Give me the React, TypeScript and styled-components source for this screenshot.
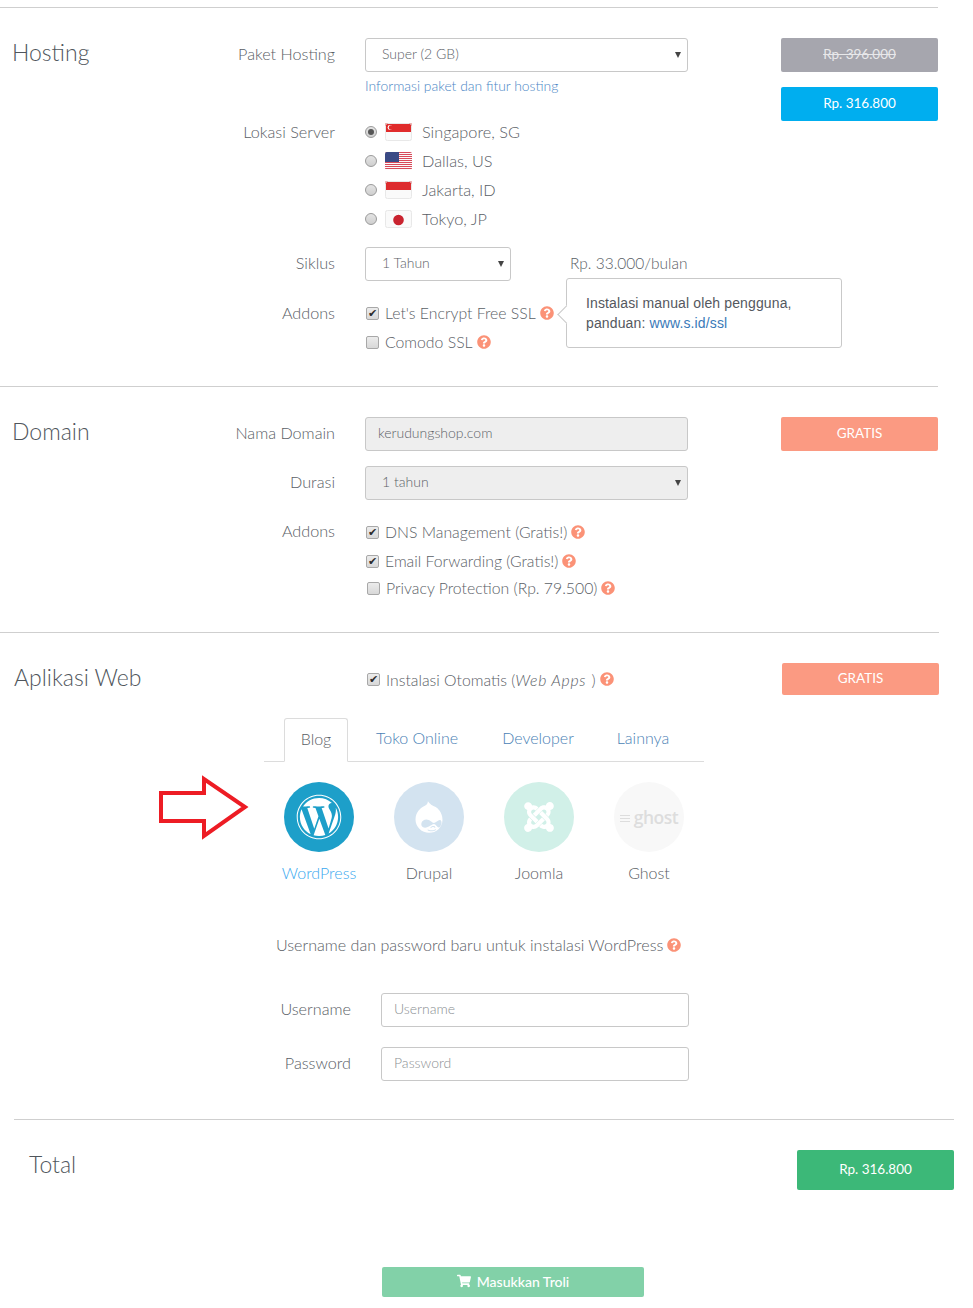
import type { ReactNode } from 'react';
import styled, { createGlobalStyle } from 'styled-components';
import { FaQuestionCircle, FaShoppingCart, FaWordpress, FaDrupal, FaJoomla } from 'react-icons/fa';

const GlobalStyle = createGlobalStyle`
  html, body {
    margin: 0;
    padding: 0;
    background: #fff;
  }
  body {
    font-family: 'Lato', 'Liberation Sans', sans-serif;
    font-weight: 300;
    font-size: 16px;
    color: #4a5056;
  }
  * {
    box-sizing: border-box;
  }
`;

const Page = styled.div`
  position: relative;
  width: 973px;
  height: 1308px;
  padding-top: 7px;
  overflow: hidden;
`;

const Section = styled.section<{ $width: number; $height: number }>`
  display: grid;
  grid-template-columns: 200px 1fr 157px;
  width: ${(p) => p.$width}px;
  height: ${(p) => p.$height}px;
  border-top: 1px solid #cfcfcf;
  padding-top: 30px;
`;

const SectionTitle = styled.h2<{ $left?: number }>`
  margin: -1px 0 0;
  padding-left: ${(p) => p.$left ?? 12}px;
  font-size: 23px;
  line-height: 30px;
  font-weight: 300;
  color: #50565c;
`;

const Fields = styled.div`
  display: flex;
  flex-direction: column;
  min-width: 0;
`;

const Row = styled.div<{ $mt?: number; $labelWidth?: number }>`
  display: grid;
  grid-template-columns: ${(p) => p.$labelWidth ?? 135}px 1fr;
  column-gap: 30px;
  margin-top: ${(p) => p.$mt ?? 0}px;
`;

const Label = styled.label`
  text-align: right;
  line-height: 32px;
  font-size: 16.2px;
  color: #5a6066;
`;

const Stack = styled.div`
  display: flex;
  flex-direction: column;
`;

const SelectWrap = styled.div<{ $width: number; $disabled?: boolean }>`
  position: relative;
  display: flex;
  align-items: center;
  width: ${(p) => p.$width}px;
  height: 34px;
  padding: 0 0 4px 16px;
  border: 1px solid #c8c8c8;
  border-radius: 3px;
  background: ${(p) => (p.$disabled ? '#eeeeee' : '#fff')};
  font-size: 14px;
  color: #5c6268;

  &::after {
    content: '';
    position: absolute;
    right: 6px;
    top: 13px;
    border-left: 3.5px solid transparent;
    border-right: 3.5px solid transparent;
    border-top: 6px solid #444;
  }
`;

const TextField = styled.div<{ $disabled?: boolean; $muted?: boolean; $width?: number }>`
  display: flex;
  align-items: center;
  width: ${(p) => p.$width ?? 323}px;
  height: 34px;
  padding: 0 0 4px 12px;
  border: 1px solid #c8c8c8;
  border-radius: 3px;
  background: ${(p) => (p.$disabled ? '#eeeeee' : '#fff')};
  font-size: 14px;
  color: ${(p) => (p.$muted ? '#8b8f93' : '#5c6268')};
`;

const InfoLink = styled.a`
  margin-top: 5px;
  font-size: 13.9px;
  line-height: 18px;
  color: #4a86c5;
`;

const RadioList = styled.div`
  display: flex;
  flex-direction: column;
  margin-top: 1px;
`;

const RadioRow = styled.div`
  display: flex;
  align-items: center;
  height: 29px;
`;

const Radio = styled.span<{ $on?: boolean }>`
  display: flex;
  align-items: center;
  justify-content: center;
  width: 12px;
  height: 12px;
  margin-right: 8px;
  border: 1px solid #9a9a9a;
  border-radius: 50%;
  background: linear-gradient(#e4e4e4, #cfcfcf);

  &::after {
    content: '';
    display: ${(p) => (p.$on ? 'block' : 'none')};
    width: 6px;
    height: 6px;
    border-radius: 50%;
    background: #555;
  }
`;

const FlagBox = styled.svg`
  flex: none;
  margin-right: 10px;
`;

const OptionText = styled.span`
  font-size: 15.8px;
  color: #5a6066;

  em {
    padding-right: 1px;
    letter-spacing: 0.7px;
  }
`;

const RadioText = styled(OptionText)`
  font-size: 16.3px;
`;

const SiklusRow = styled.div`
  display: flex;
  align-items: center;
  gap: 59px;
`;

const PerMonth = styled.span`
  padding-bottom: 2px;
  font-size: 15.5px;
  color: #5a6066;
`;

const CheckList = styled.div<{ $mt?: number }>`
  display: flex;
  flex-direction: column;
  margin-top: ${(p) => p.$mt ?? 0}px;
`;

const CheckRow = styled.div<{ $height?: number; $shift?: number }>`
  display: flex;
  align-items: center;
  height: ${(p) => p.$height ?? 29}px;
  margin-left: ${(p) => p.$shift ?? 0}px;
`;

const Check = styled.span`
  display: flex;
  align-items: center;
  justify-content: center;
  flex: none;
  width: 13px;
  height: 13px;
  margin: 1px 6px 0 1px;
  border: 1px solid #a8a8a8;
  border-radius: 2px;
  background: linear-gradient(#ececec, #d8d8d8);
  font-family: 'DejaVu Sans', sans-serif;
  font-size: 11px;
  line-height: 1;
  font-weight: 400;
  color: #2c2c2c;
`;

const HelpIcon = styled(FaQuestionCircle)`
  flex: none;
  margin-left: 4px;
  width: 14px;
  height: 14px;
  color: #fb9277;
`;

const Popover = styled.div`
  position: absolute;
  left: 566px;
  top: 278px;
  width: 276px;
  height: 70px;
  padding: 14px 19px;
  border: 1px solid #c9c9c9;
  border-radius: 3px;
  background: #fff;
  font-family: 'Liberation Sans', Arial, sans-serif;
  font-weight: 400;
  font-size: 14px;
  letter-spacing: 0.13px;
  line-height: 20px;
  color: #54585e;

  &::before {
    content: '';
    position: absolute;
    left: -7px;
    top: 29px;
    width: 12px;
    height: 12px;
    background: #fff;
    border-left: 1px solid #c9c9c9;
    border-bottom: 1px solid #c9c9c9;
    transform: rotate(45deg);
  }

  a {
    color: #3a7ab8;
  }
`;

const Side = styled.div`
  display: flex;
  flex-direction: column;
  gap: 15px;
`;

const PriceBox = styled.div<{ $bg: string; $height?: number; $width?: number; $strike?: boolean; $color?: string }>`
  display: flex;
  align-items: center;
  justify-content: center;
  width: ${(p) => (p.$width ? `${p.$width}px` : 'auto')};
  height: ${(p) => p.$height ?? 34}px;
  padding-bottom: 2px;
  border-radius: 2px;
  background: ${(p) => p.$bg};
  color: ${(p) => p.$color ?? '#fff'};
  font-size: 13.5px;
  font-weight: 400;
  text-decoration: ${(p) => (p.$strike ? 'line-through' : 'none')};
`;

const Tabs = styled.div`
  display: flex;
  align-items: flex-end;
  width: 440px;
  height: 44px;
  margin: 23px 0 0 64px;
  padding-left: 20px;
  border-bottom: 1px solid #dcdcdc;
`;

const Tab = styled.div<{ $active?: boolean; $width: number }>`
  flex: none;
  width: ${(p) => p.$width}px;
  height: 44px;
  line-height: 41px;
  text-align: center;
  font-size: 16px;
  color: ${(p) => (p.$active ? '#5a6066' : '#4a7fb5')};
  ${(p) =>
    p.$active &&
    `
    margin-bottom: -1px;
    line-height: 39px;
    background: #fff;
    border: 1px solid #dcdcdc;
    border-bottom-color: #fff;
    border-radius: 3px 3px 0 0;
  `}
`;

const Apps = styled.div`
  display: flex;
  margin: 20px 0 0 84px;
`;

const AppItem = styled.div`
  display: flex;
  flex-direction: column;
  align-items: center;
  width: 70px;
  margin-right: 40px;
  white-space: nowrap;
`;

const AppCircle = styled.div<{ $bg: string }>`
  display: flex;
  align-items: center;
  justify-content: center;
  flex: none;
  width: 70px;
  height: 70px;
  border-radius: 50%;
  background: ${(p) => p.$bg};
  color: #fff;
`;

const AppName = styled.div<{ $active?: boolean }>`
  margin-top: 11px;
  font-size: 16px;
  line-height: 20px;
  color: ${(p) => (p.$active ? '#3aa9ef' : '#5a6066')};
`;

const GhostMark = styled.span`
  display: flex;
  align-items: center;
  gap: 4px;
  font-family: 'Open Sans', sans-serif;
  font-weight: 600;
  font-size: 17.5px;
  letter-spacing: -0.5px;
  color: #dddddd;
`;

const GhostLines = styled.span`
  width: 10px;
  height: 8px;
  margin-top: 3px;
  background: repeating-linear-gradient(#dddddd 0 1px, transparent 1px 3px);
`;

const CredentialsNote = styled.div`
  display: flex;
  align-items: center;
  margin-top: 52px;
  padding-left: 76px;
  width: 700px;
  font-size: 16.1px;
  line-height: 20px;
  color: #5a6066;
`;

const Arrow = styled.svg`
  position: absolute;
  left: 158px;
  top: 774px;
`;

const TotalSection = styled.section`
  margin-left: 14px;
  width: 940px;
  border-top: 1px solid #cfcfcf;
  padding-top: 30px;
`;

const TotalRow = styled.div`
  display: flex;
  justify-content: space-between;
  align-items: flex-start;
`;

const CartButton = styled.button`
  display: flex;
  align-items: center;
  justify-content: center;
  gap: 6px;
  width: 262px;
  height: 30px;
  margin: 77px 0 0 368px;
  padding: 0 0 2px;
  border: none;
  border-radius: 2px;
  background: #82d1a8;
  color: #fff;
  font-family: 'Lato', sans-serif;
  font-size: 14px;
  font-weight: 500;
`;

function Flag({ code }: { code: 'sg' | 'us' | 'id' | 'jp' }) {
  return (
    <FlagBox width="27" height="18" viewBox="0 0 27 18">
      <defs>
        <clipPath id={`clip-${code}`}>
          <rect width="27" height="18" rx="2" />
        </clipPath>
      </defs>
      <g clipPath={`url(#clip-${code})`}>
        <rect width="27" height="18" fill="#fafafa" />
        {code === 'sg' && (
          <>
            <rect width="27" height="9" fill="#e02b2b" />
            <circle cx="5" cy="4.5" r="2.4" fill="#fff" />
            <circle cx="6" cy="4.5" r="2.2" fill="#e02b2b" />
          </>
        )}
        {code === 'id' && <rect width="27" height="9" fill="#dd2c2f" />}
        {code === 'jp' && <circle cx="13.5" cy="10" r="5.3" fill="#c9232f" />}
        {code === 'us' && (
          <>
            {[0, 1, 2, 3, 4, 5, 6, 7, 8].map((i) => (
              <rect key={i} y={i * 2} width="27" height="1" fill="#d9495a" />
            ))}
            <rect width="14" height="10" fill="#3a4a85" />
          </>
        )}
      </g>
      {code !== 'us' && <rect x="0.5" y="0.5" width="26" height="17" rx="2" fill="none" stroke="#e8e8e8" />}
    </FlagBox>
  );
}

function CheckOption({
  on,
  children,
  height,
  shift,
}: {
  on?: boolean;
  children: ReactNode;
  height?: number;
  shift?: number;
}) {
  return (
    <CheckRow $height={height} $shift={shift}>
      <Check>{on ? '✔' : ''}</Check>
      <OptionText>{children}</OptionText>
      <HelpIcon />
    </CheckRow>
  );
}

export default function App() {
  return (
    <Page>
      <GlobalStyle />

      {/* Hosting */}
      <Section $width={938} $height={379}>
        <SectionTitle>Hosting</SectionTitle>
        <Fields>
          <Row>
            <Label>Paket Hosting</Label>
            <Stack>
              <SelectWrap $width={323}>Super (2 GB)</SelectWrap>
              <InfoLink>Informasi paket dan fitur hosting</InfoLink>
            </Stack>
          </Row>
          <Row $mt={21}>
            <Label>Lokasi Server</Label>
            <RadioList>
              <RadioRow><Radio $on /><Flag code="sg" /><RadioText>Singapore, SG</RadioText></RadioRow>
              <RadioRow><Radio /><Flag code="us" /><RadioText>Dallas, US</RadioText></RadioRow>
              <RadioRow><Radio /><Flag code="id" /><RadioText>Jakarta, ID</RadioText></RadioRow>
              <RadioRow><Radio /><Flag code="jp" /><RadioText>Tokyo, JP</RadioText></RadioRow>
            </RadioList>
          </Row>
          <Row $mt={14}>
            <Label>Siklus</Label>
            <SiklusRow>
              <SelectWrap $width={146}>1 Tahun</SelectWrap>
              <PerMonth>Rp. 33.000/bulan</PerMonth>
            </SiklusRow>
          </Row>
          <Row $mt={16}>
            <Label>Addons</Label>
            <CheckList $mt={1}>
              <CheckOption on>Let's Encrypt Free SSL</CheckOption>
              <CheckOption>Comodo SSL</CheckOption>
            </CheckList>
          </Row>
        </Fields>
        <Side>
          <PriceBox $bg="#a6a6ae" $color="#e8e8ea" $strike>Rp. 396.000</PriceBox>
          <PriceBox $bg="#00aeef">Rp. 316.800</PriceBox>
        </Side>
      </Section>

      {/* Domain */}
      <Section $width={938} $height={246}>
        <SectionTitle>Domain</SectionTitle>
        <Fields>
          <Row>
            <Label>Nama Domain</Label>
            <TextField $disabled>kerudungshop.com</TextField>
          </Row>
          <Row $mt={15}>
            <Label>Durasi</Label>
            <SelectWrap $width={323} $disabled>1 tahun</SelectWrap>
          </Row>
          <Row $mt={15}>
            <Label>Addons</Label>
            <CheckList $mt={2}>
              <CheckOption on>DNS Management (Gratis!)</CheckOption>
              <CheckOption on>Email Forwarding (Gratis!)</CheckOption>
              <CheckOption height={25} shift={1}>Privacy Protection (Rp. 79.500)</CheckOption>
            </CheckList>
          </Row>
        </Fields>
        <Side>
          <PriceBox $bg="#fb9a82">GRATIS</PriceBox>
        </Side>
      </Section>

      {/* Aplikasi Web */}
      <Section $width={939} $height={487}>
        <SectionTitle $left={14}>Aplikasi Web</SectionTitle>
        <Fields>
          <Row $labelWidth={136}>
            <span />
            <CheckRow $height={32}>
              <Check>✔</Check>
              <OptionText>Instalasi Otomatis (<em>Web Apps</em> )</OptionText>
              <HelpIcon />
            </CheckRow>
          </Row>
          <Tabs>
            <Tab $active $width={64}>Blog</Tab>
            <Tab $width={138}>Toko Online</Tab>
            <Tab $width={104}>Developer</Tab>
            <Tab $width={106}>Lainnya</Tab>
          </Tabs>
          <Apps>
            <AppItem>
              <AppCircle $bg="#1d9fc9"><FaWordpress size={46} /></AppCircle>
              <AppName $active>WordPress</AppName>
            </AppItem>
            <AppItem>
              <AppCircle $bg="#d3e3f0"><FaDrupal size={36} /></AppCircle>
              <AppName>Drupal</AppName>
            </AppItem>
            <AppItem>
              <AppCircle $bg="#d1f0e8"><FaJoomla size={34} /></AppCircle>
              <AppName>Joomla</AppName>
            </AppItem>
            <AppItem>
              <AppCircle $bg="#f8f8f8">
                <GhostMark><GhostLines />ghost</GhostMark>
              </AppCircle>
              <AppName>Ghost</AppName>
            </AppItem>
          </Apps>
          <CredentialsNote>
            Username dan password baru untuk instalasi WordPress
            <HelpIcon />
          </CredentialsNote>
          <Row $mt={38} $labelWidth={151}>
            <Label>Username</Label>
            <TextField $width={308} $muted>Username</TextField>
          </Row>
          <Row $mt={20} $labelWidth={151}>
            <Label>Password</Label>
            <TextField $width={308} $muted>Password</TextField>
          </Row>
        </Fields>
        <Side>
          <PriceBox $bg="#fb9a82" $height={32}>GRATIS</PriceBox>
        </Side>
      </Section>

      {/* Total */}
      <TotalSection>
        <TotalRow>
          <SectionTitle $left={15}>Total</SectionTitle>
          <PriceBox $bg="#3cb878" $height={40} $width={157}>Rp. 316.800</PriceBox>
        </TotalRow>
        <CartButton>
          <FaShoppingCart size={14} />
          Masukkan Troli
        </CartButton>
      </TotalSection>

      <Popover>
        Instalasi manual oleh pengguna,
        <br />
        panduan: <a>www.s.id/ssl</a>
      </Popover>

      <Arrow width="92" height="66" viewBox="0 0 92 66">
        <path d="M3 19 H46 V5 L87 33 L46 62 V47 H3 Z" fill="none" stroke="#ed1c24" strokeWidth="4" />
      </Arrow>
    </Page>
  );
}
